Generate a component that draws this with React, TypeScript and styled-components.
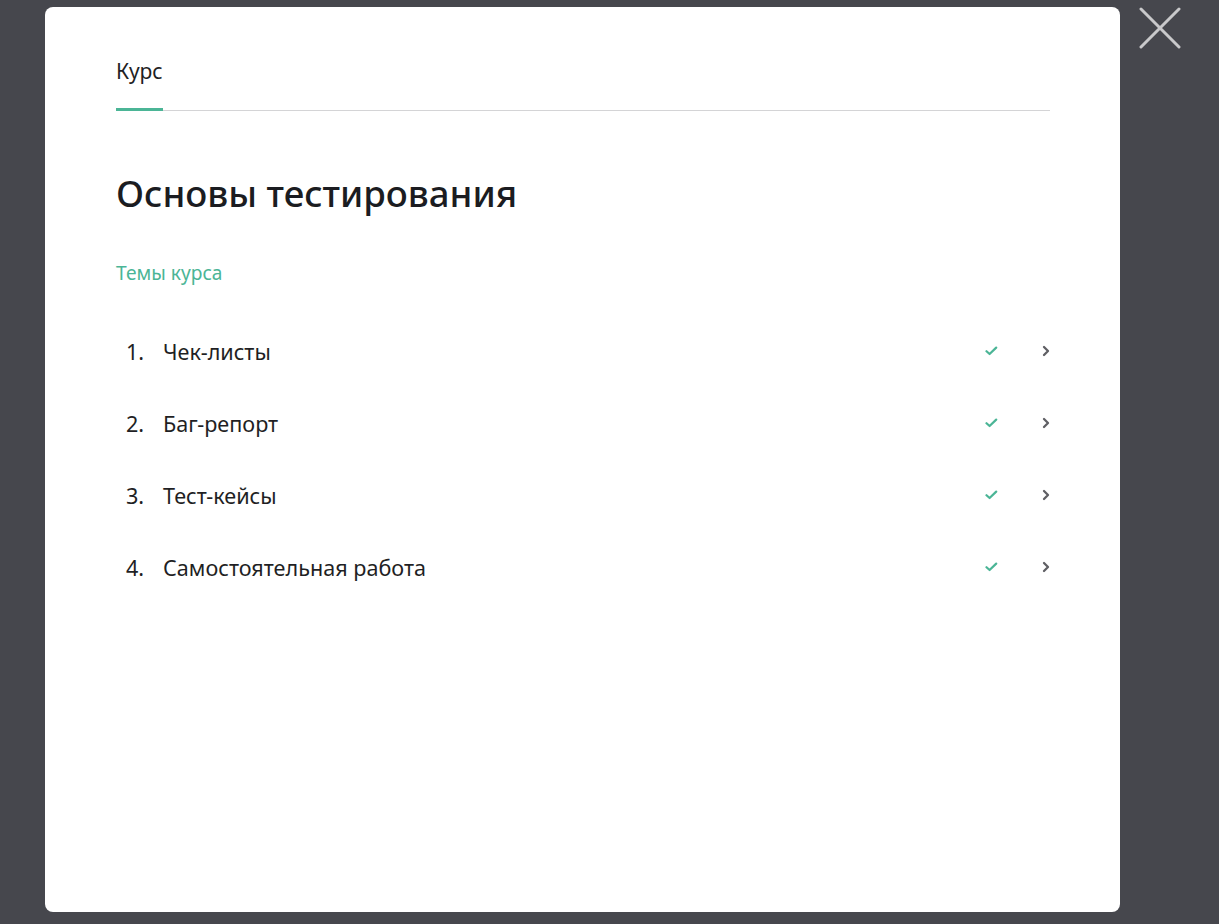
import React from "react";
import styled, { createGlobalStyle } from "styled-components";

const Global = createGlobalStyle`
  html, body { margin: 0; padding: 0; }
  body {
    background: #46474d;
    font-family: "Noto Sans", "Open Sans", sans-serif;
    -webkit-font-smoothing: antialiased;
  }
`;

const Page = styled.div`
  position: relative;
  width: 1219px;
  height: 924px;
  box-sizing: border-box;
  padding: 7px 0 12px 45px;
  display: flex;
  align-items: stretch;
`;

const Modal = styled.div`
  width: 1075px;
  background: #fff;
  border-radius: 8px;
  box-sizing: border-box;
  padding: 52px 70px 0 71px;
  display: flex;
  flex-direction: column;
`;

const CloseButton = styled.button`
  position: absolute;
  top: 7px;
  left: 1139px;
  width: 42px;
  height: 42px;
  padding: 0;
  border: 0;
  background: transparent;
  cursor: pointer;
  svg { display: block; }
`;

const Tabs = styled.div`
  display: flex;
  border-bottom: 1px solid #d4d4d6;
`;

const Tab = styled.div<{ $active?: boolean }>`
  font-size: 21px;
  line-height: 24px;
  color: #1f1f24;
  padding: 0 0 25px 0;
  margin-bottom: -1px;
  border-bottom: 3px solid ${(p) => (p.$active ? "#4bb596" : "transparent")};
`;

const Title = styled.h1`
  margin: 58px 0 0 0;
  font-size: 36.6px;
  line-height: 48px;
  font-weight: 500;
  color: #1b1c21;
`;

const Subtitle = styled.div`
  margin-top: 44px;
  font-size: 19.2px;
  line-height: 24px;
  color: #4bb596;
`;

const List = styled.ol`
  list-style: none;
  margin: 30px 0 0 0;
  padding: 0;
`;

const Row = styled.li`
  display: flex;
  align-items: center;
  height: 72px;
  font-size: 21.6px;
  color: #1f1f24;
`;

const Num = styled.span`
  width: 37px;
  padding-left: 10px;
  box-sizing: content-box;
  flex: none;
`;

const Name = styled.span`
  flex: 1;
`;

const Check = styled.span`
  display: flex;
  width: 14px;
  margin-right: 43px;
`;

const Chevron = styled.span`
  display: flex;
  width: 8px;
`;

const topics = ["Чек-листы", "Баг-репорт", "Тест-кейсы", "Самостоятельная работа"];

export default function App() {
  return (
    <>
      <Global />
      <Page>
        <Modal>
          <Tabs>
            <Tab $active>Курс</Tab>
          </Tabs>
          <Title>Основы тестирования</Title>
          <Subtitle>Темы курса</Subtitle>
          <List>
            {topics.map((t, i) => (
              <Row key={t}>
                <Num>{i + 1}.</Num>
                <Name>{t}</Name>
                <Check>
                  <svg width="13" height="10" viewBox="0 0 13 10">
                    <path d="M1.5 5.2 L4.6 8 L11.2 1.6" fill="none" stroke="#4bb596" strokeWidth="2.2" strokeLinecap="round" strokeLinejoin="round" />
                  </svg>
                </Check>
                <Chevron>
                  <svg width="8" height="12" viewBox="0 0 8 12">
                    <path d="M2 2 L6 6 L2 10" fill="none" stroke="#5f5f64" strokeWidth="2.3" strokeLinecap="round" strokeLinejoin="round" />
                  </svg>
                </Chevron>
              </Row>
            ))}
          </List>
        </Modal>
        <CloseButton aria-label="Закрыть">
          <svg width="42" height="42" viewBox="0 0 42 42">
            <path d="M2 2 L40 40 M40 2 L2 40" stroke="#c9c9cb" strokeWidth="3" strokeLinecap="round" />
          </svg>
        </CloseButton>
      </Page>
    </>
  );
}
